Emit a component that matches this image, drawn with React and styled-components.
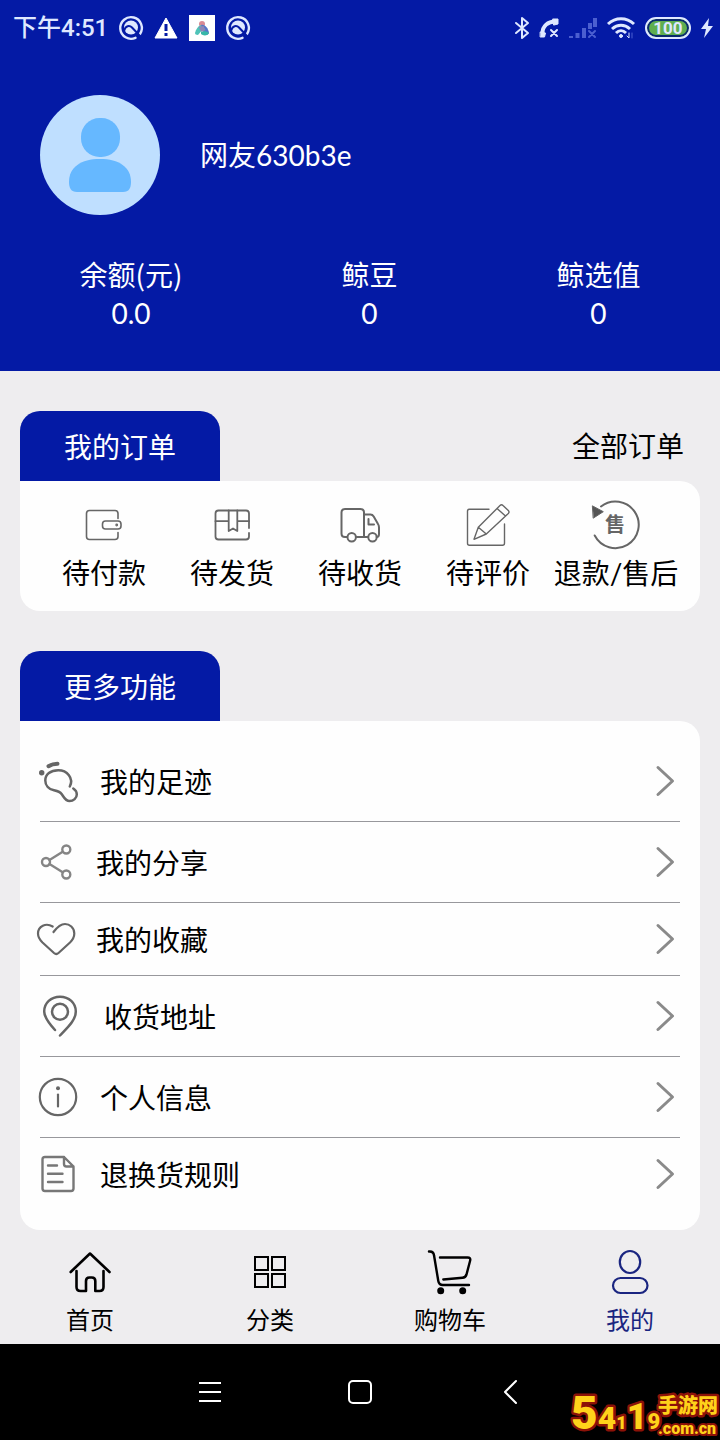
import React from "react";
import styled, { createGlobalStyle } from "styled-components";

const GlobalStyle = createGlobalStyle`
  * {
    box-sizing: border-box;
  }
  body {
    margin: 0;
    background: #eeedef;
    font-family: Lato, "Noto Sans CJK SC", sans-serif;
    font-weight: 400;
    color: #000;
  }
  a {
    color: inherit;
    text-decoration: none;
  }
  svg {
    display: block;
    flex-shrink: 0;
    overflow: visible;
  }
`;

const Page = styled.div`
  display: flex;
  flex-direction: column;
  min-height: 100vh;
`;

const Header = styled.header`
  background: #041aa5;
  color: #fff;
  padding-bottom: 38px;
`;

const StatusBar = styled.div`
  display: flex;
  align-items: center;
  justify-content: space-between;
  height: 55px;
  padding: 0 7px 0 13px;
  color: #dfe8ff;
`;

const StatusGroup = styled.div`
  display: flex;
  align-items: center;
  gap: ${({ $gap }) => $gap}px;
`;

const Clock = styled.span`
  font-family: Roboto, "Noto Sans CJK SC", sans-serif;
  font-size: 24px;
  font-weight: 500;
  line-height: 32px;
`;

const Battery = styled.span`
  display: flex;
  align-items: center;
  justify-content: center;
  width: 46px;
  height: 22px;
  border: 2px solid #dfe8ff;
  border-radius: 11px;
  background: #5fae50;
  box-shadow: inset 0 0 0 2px #0a2a6e;
  font-family: Roboto, sans-serif;
  font-size: 17px;
  font-weight: 700;
  line-height: 18px;
`;

const Profile = styled.div`
  display: flex;
  align-items: center;
  gap: 40px;
  padding: 40px;
`;

const UserName = styled.h1`
  margin: 0;
  font-size: 28px;
  font-weight: 400;
  line-height: 38px;
`;

const Stats = styled.div`
  display: flex;
  justify-content: space-around;
`;

const Stat = styled.div`
  display: flex;
  flex-direction: column;
  align-items: center;
  font-size: 28px;
  line-height: 39px;
`;

const StatLabel = styled.span`
  font-family: "Noto Sans CJK SC", sans-serif;
`;

const Main = styled.main`
  display: flex;
  flex: 1;
  flex-direction: column;
  gap: 40px;
  padding: 40px 20px 1px;
`;

const SectionHead = styled.div`
  display: flex;
  align-items: center;
  justify-content: space-between;
  padding-right: 16px;
  font-size: 28px;
  line-height: 40px;
`;

const SectionTab = styled.h2`
  width: 200px;
  margin: 0;
  padding: 16px 0 14px;
  border-radius: 20px 20px 0 0;
  background: #041aa5;
  color: #fff;
  font-size: 28px;
  font-weight: 400;
  line-height: 40px;
  text-align: center;
`;

const Card = styled.div`
  padding: 20px;
  border-radius: 0 20px 20px 20px;
  background: #fefefe;
`;

const Orders = styled(Card)`
  display: grid;
  grid-template-columns: repeat(5, 1fr);
  padding-bottom: 18px;
`;

const OrderLink = styled.a`
  display: flex;
  flex-direction: column;
  align-items: center;
  gap: 4px;
  font-size: 28px;
  line-height: 40px;
  white-space: nowrap;
`;

const MenuRow = styled.a`
  display: flex;
  align-items: center;
  padding: 20px 4px 20px 0;
  border-bottom: 1px solid #98989c;
  font-size: 28px;
  line-height: 30px;

  &:last-child {
    border-bottom: 0;
  }
`;

const MenuLabel = styled.span`
  flex: 1;
  padding: 2px 0 0 20px;
`;

const TabBar = styled.nav`
  display: grid;
  grid-template-columns: repeat(4, 1fr);
  padding: 19px 0 8px;
`;

const TabLink = styled.a`
  display: flex;
  flex-direction: column;
  align-items: center;
  gap: 9px;
  color: ${({ $active }) => ($active ? "#1a2580" : "#000")};
  font-size: 24px;
  line-height: 33px;
`;

const SystemBar = styled.div`
  position: relative;
  display: flex;
  align-items: center;
  justify-content: center;
  gap: 102px;
  height: 96px;
  background: #000;
`;

const SystemButton = styled.button`
  display: flex;
  align-items: center;
  justify-content: center;
  width: 48px;
  height: 48px;
  padding: 0;
  border: 0;
  background: none;
  color: #fff;
`;

const Watermark = styled.svg`
  position: absolute;
  right: 0;
  bottom: 0;
  fill: #ffd21a;
  stroke: #8c1208;
  stroke-linejoin: round;
  paint-order: stroke;
  font-family: Roboto, "Noto Sans CJK SC", sans-serif;
  font-weight: 900;
`;

// shared outline svg
const Line = ({ w, h, stroke = 2, color = "#666", children }) => (
  <svg
    width={w}
    height={h}
    viewBox={`0 0 ${w} ${h}`}
    fill="none"
    stroke={color}
    strokeWidth={stroke}
    strokeLinecap="round"
    strokeLinejoin="round"
    aria-hidden="true"
  >
    {children}
  </svg>
);

const AppMark = () => (
  <Line w={24} h={24} stroke={2.4} color="#dfe8ff">
    <path d="M16.500 21.800A10.800 10.800 0 1 1 21 18" />
    <circle cx="12" cy="11.500" r="7" fill="#dfe8ff" stroke="none" />
    <path d="M5 15C6.500 9.500 10.500 9 13 11.500L21 20" stroke="#041aa5" strokeWidth="2" />
  </Line>
);

const Warning = () => (
  <svg width="24" height="22" viewBox="0 0 24 22" aria-hidden="true">
    <path d="M12 1 23 21H1z" fill="#fff" stroke="#fff" strokeLinejoin="round" />
    <path d="M12 7v7M12 16v3" stroke="#041aa5" strokeWidth="3" />
  </svg>
);

const ColorApp = () => (
  <svg width="26" height="26" viewBox="0 0 26 26" aria-hidden="true">
    <path d="M0 0h26v26H0z" fill="#fff" />
    <circle cx="13" cy="9" r="3" fill="#d98a94" />
    <path d="M6 18c1-4 3-7 6-8l2 4-5 6c-2 0-3-1-3-2z" fill="#4fc3b8" />
    <path d="M12 10c4-1 7 3 8 8-1 2-3 2.500-5 1z" fill="#5576c9" />
    <path d="M9.500 12l5-1 2 4-4 2z" fill="#8f86b5" />
    <path d="M12 17c2-1 6-1 8 1-1 3-6 3-8 1z" fill="#37b7a8" />
  </svg>
);

const Bluetooth = () => (
  <Line w={14} h={24} stroke={2} color="#dfe8ff">
    <path d="M1 7l12 10-6 5V2l6 5L1 17" />
  </Line>
);

const Call = () => (
  <Line w={20} h={20} stroke={2} color="#dfe8ff">
    <path d="M3.500 15C3.500 8 9 3.500 16 3.500" strokeWidth="4" strokeLinecap="butt" />
    <path d="M1.500 14l5 1-1 4h-4zM14 1h5v5l-4 1z" fill="#dfe8ff" strokeWidth="1" />
    <path d="M12 12l6 6M18 12l-6 6" />
  </Line>
);

const Signal = () => (
  <Line w={28} h={20} stroke={4} color="#4b5fd0">
    <path d="M2 20v-2M8.500 20v-5M15 20V10M21 11V5M26 9V0" strokeLinecap="butt" />
    <path d="M20 13l6 6M26 13l-6 6" strokeWidth="2" />
  </Line>
);

const Wifi = () => (
  <Line w={28} h={22} stroke={3} color="#dfe8ff">
    <path d="M1 7c7.500-7 18.500-7 26 0M5 12c5.500-5 12.500-5 18 0M9 16c3-3 7-3 10 0" strokeLinecap="butt" />
    <circle cx="14" cy="19" r="1.500" fill="#dfe8ff" strokeWidth="1" />
    <path d="M22 16v5l-2-2" strokeWidth="1" />
    <path d="M25 21v-5" strokeWidth="1" stroke="#4b5fd0" />
  </Line>
);

const Bolt = () => (
  <svg width="12" height="20" viewBox="0 0 12 20" aria-hidden="true">
    <path d="M8 0 0 11h5L3 20l9-12H7z" fill="#dfe8ff" />
  </svg>
);

const Avatar = () => (
  <svg width="120" height="120" viewBox="0 0 120 120" role="img" aria-label="头像">
    <circle cx="60" cy="60" r="60" fill="#bfdfff" />
    <rect x="41" y="23" width="39" height="39" rx="18.500" fill="#66b8ff" />
    <path d="M29 87C29 72 41 64 60 64s31 8 31 23c0 6-2 10-8 10H37c-6 0-8-4-8-10z" fill="#66b8ff" />
  </svg>
);

const Wallet = () => (
  <Line w={48} h={48} stroke={1.6}>
    <path d="M38 17.500V12.500q0-3-3-3H9.500q-3 0-3 3v23q0 3 3 3H35q3 0 3-3V31.500" />
    <rect x="22.500" y="20" width="18.500" height="8" rx="3" />
    <circle cx="36.700" cy="24" r=".6" />
  </Line>
);

const Parcel = () => (
  <Line w={48} h={48} stroke={1.8}>
    <path d="M41 27V12.500q0-3-3-3H10.500q-3 0-3 3v23q0 3 3 3H38q3 0 3-3V32" />
    <path d="M7.500 20.200H20.700M29.300 20.200H41M20.700 9.500V30l4.300-2.500 4.300 2.500V9.500" />
  </Line>
);

const Truck = () => (
  <Line w={48} h={48} stroke={2}>
    <path d="M11 36H9q-3.500 0-3.500-3.500v-21Q5.500 8 9 8h15.500Q28 8 28 11.500V36M20.500 36H32" />
    <path d="M28 13.500h6.500q2 0 3.200 2l4.300 7.500q1 1.500 1 3.500V33q0 3-2.300 3" />
    <path d="M32.500 18v5.500H38" />
    <circle cx="15.700" cy="36.300" r="4.200" />
    <circle cx="36.500" cy="36.300" r="4.200" />
  </Line>
);

const Edit = () => (
  <Line w={48} h={48} stroke={1.4}>
    <path d="M25 8.300H5.500q-2 0-2 2v32q0 2 2 2h33q2 0 2-2V23" />
    <path d="M10 38.300l4.300-12L36 4.500q1.500-1.500 3 0l5.300 5q1.500 1.500 0 3L22.300 33zM14.300 26.300l8 6.700M33 7.500l8.500 7.500" />
  </Line>
);

const Refund = () => (
  <Line w={48} h={48} stroke={2}>
    <path d="M2.700 34.500A23.300 23.300 0 1 0 9 5.500" />
    <path d="M.7 5L11.300 10.700 1.500 17z" fill="#555" strokeWidth="1" />
    <text
      x="23"
      y="31"
      textAnchor="middle"
      fontSize="20"
      fontWeight="700"
      fontFamily='"Noto Sans CJK SC", sans-serif'
      fill="#666"
      stroke="none"
    >
      售
    </text>
  </Line>
);

const Footprint = () => (
  <Line w={40} h={40} stroke={2.5}>
    <circle cx="1.700" cy="11.800" r="2.700" fill="#666" stroke="none" />
    <path d="M8.500 5.200Q12 3 17.500 2.800" strokeWidth="4" />
    <path d="M29.800 25.500C34 17 27 9.200 18.300 9.200 10.500 9.200 5.300 13.500 5.300 19.500c0 5 3.500 8.700 8.700 9.800 4 .8 6 1.200 8 4.200 2.300 3.500 3.700 6.500 7.500 6.500 4 0 7.300-3 7.300-6.500 0-2.500-1.200-4.500-3.500-6" />
  </Line>
);

const Share = () => (
  <Line w={36} h={40} stroke={2.4} color="#858585">
    <circle cx="26.300" cy="7.500" r="4" />
    <circle cx="6" cy="20" r="4" />
    <circle cx="26.300" cy="32.500" r="4" />
    <path d="M9.500 18l13.200-8.300M9.500 22l13.200 8.300" />
  </Line>
);

const Heart = () => (
  <Line w={36} h={32} stroke={2.2}>
    <path d="M12.700 3.500C6-.5-2 3-2 10.500c0 4 2 6.500 4.500 9L14 30q2.300 2 4.500 0L30 19.500c2.500-2.500 4.300-5 4.300-9C34.300 4.500 29.500 1 25 1c-5 0-8.500 4-11.500 8" />
  </Line>
);

const Pin = () => (
  <Line w={44} h={40} stroke={2.5}>
    <circle cx="20" cy="15.700" r="8" />
    <path d="M15 34C10 28.500 4.200 22 4.200 15.500 4.200 7 11 .7 20 .7S35.800 7 35.800 15.500C35.800 24.500 27 32 20 39.500" />
  </Line>
);

const Info = () => (
  <Line w={40} h={40} stroke={2.2}>
    <circle cx="18" cy="20" r="18.200" />
    <circle cx="18" cy="11.300" r="2" fill="#666" stroke="none" />
    <path d="M18 17.500V29.500" />
  </Line>
);

const Doc = () => (
  <Line w={40} h={32} stroke={2.4} color="#777">
    <path d="M24-1H5Q2.500-1 2.500 1.500v29Q2.500 33 5 33h26q2.500 0 2.500-2.500V8.500zV6q0 2.500 2.500 2.500h7" />
    <path d="M8 7.500h9M8 15.700h14.500M8 24h14.500" />
  </Line>
);

const Chevron = () => (
  <Line w={20} h={32} stroke={3} color="#8a8a8a">
    <path d="M2 2.500L16.500 16 2 29.500" />
  </Line>
);

const Home = () => (
  <Line w={44} h={44} stroke={2.6} color="currentColor">
    <path d="M2.700 22L22 3.500 41.500 22" />
    <path d="M8.500 21v16q0 4 4 4H18V31q0-3.500 3.500-3.500h2.300q3.500 0 3.500 3.500v10h4.200q4 0 4-4V21" />
  </Line>
);

const Grid = () => (
  <Line w={44} h={44} stroke={2} color="currentColor">
    <path d="M7 7h13v13H7zM24 7h13v13H24zM7 24h13v13H7zM24 24h13v13H24z" strokeLinejoin="miter" />
  </Line>
);

const Cart = () => (
  <Line w={44} h={44} stroke={2.4} color="currentColor">
    <path d="M1 1.500Q5.500 1 6 5.300L10.300 31q.7 4 4.500 4H41" />
    <path d="M12 7.500H39.500q3.500 0 2.600 3.300L38.500 24.500q-1 3-4 3.300L15.300 29.500" />
    <circle cx="12.700" cy="40.700" r="2.300" fill="currentColor" />
    <circle cx="34.700" cy="40.700" r="2.300" fill="currentColor" />
  </Line>
);

const Person = () => (
  <Line w={44} h={44} stroke={2.2} color="currentColor">
    <ellipse cx="22" cy="12" rx="10.200" ry="11" />
    <rect x="5" y="28" width="34.500" height="15" rx="7.500" />
  </Line>
);

const stats = [
  { label: "余额(元)", value: "0.0" },
  { label: "鲸豆", value: "0" },
  { label: "鲸选值", value: "0" },
];

const orders = [
  { label: "待付款", Icon: Wallet },
  { label: "待发货", Icon: Parcel },
  { label: "待收货", Icon: Truck },
  { label: "待评价", Icon: Edit },
  { label: "退款/售后", Icon: Refund },
];

const menu = [
  { label: "我的足迹", Icon: Footprint },
  { label: "我的分享", Icon: Share },
  { label: "我的收藏", Icon: Heart },
  { label: "收货地址", Icon: Pin },
  { label: "个人信息", Icon: Info },
  { label: "退换货规则", Icon: Doc },
];

const tabs = [
  { label: "首页", Icon: Home },
  { label: "分类", Icon: Grid },
  { label: "购物车", Icon: Cart },
  { label: "我的", Icon: Person, active: true },
];

export default function App() {
  return (
    <Page>
      <GlobalStyle />
      <Header>
        <StatusBar>
          <StatusGroup $gap={11}>
            <Clock>下午4:51</Clock>
            <AppMark />
            <Warning />
            <ColorApp />
            <AppMark />
          </StatusGroup>
          <StatusGroup $gap={10}>
            <Bluetooth />
            <Call />
            <Signal />
            <Wifi />
            <Battery>100</Battery>
            <Bolt />
          </StatusGroup>
        </StatusBar>
        <Profile>
          <Avatar />
          <UserName>网友630b3e</UserName>
        </Profile>
        <Stats>
          {stats.map(({ label, value }) => (
            <Stat key={label}>
              <StatLabel>{label}</StatLabel>
              <span>{value}</span>
            </Stat>
          ))}
        </Stats>
      </Header>

      <Main>
        <section>
          <SectionHead>
            <SectionTab>我的订单</SectionTab>
            <a href="#orders">全部订单</a>
          </SectionHead>
          <Orders>
            {orders.map(({ label, Icon }) => (
              <OrderLink key={label} href="#orders">
                <Icon />
                <span>{label}</span>
              </OrderLink>
            ))}
          </Orders>
        </section>

        <section>
          <SectionHead>
            <SectionTab>更多功能</SectionTab>
          </SectionHead>
          <Card>
            {menu.map(({ label, Icon }) => (
              <MenuRow key={label} href="#menu">
                <Icon />
                <MenuLabel>{label}</MenuLabel>
                <Chevron />
              </MenuRow>
            ))}
          </Card>
        </section>
      </Main>

      <TabBar>
        {tabs.map(({ label, Icon, active }) => (
          <TabLink key={label} href="#tab" $active={active}>
            <Icon />
            <span>{label}</span>
          </TabLink>
        ))}
      </TabBar>

      <SystemBar>
        <SystemButton aria-label="菜单">
          <Line w={22} h={20} stroke={2} color="currentColor">
            <path d="M0 1h22M0 10h22M0 19h22" strokeLinecap="butt" />
          </Line>
        </SystemButton>
        <SystemButton aria-label="主屏幕">
          <Line w={24} h={24} stroke={2} color="currentColor">
            <rect x="1" y="1" width="22" height="22" rx="4" />
          </Line>
        </SystemButton>
        <SystemButton aria-label="返回">
          <Line w={12} h={24} stroke={2} color="currentColor">
            <path d="M12 1L1 12l11 11" />
          </Line>
        </SystemButton>
        <Watermark width="150" height="56" viewBox="0 0 150 56" strokeWidth="5">
          <text x="1" y="45">
            <tspan fontSize="46">5</tspan>
            <tspan fontSize="32">4</tspan>
            <tspan fontSize="18">1</tspan>
            <tspan fontSize="36">1</tspan>
            <tspan fontSize="22">9</tspan>
          </text>
          <text x="88" y="29" fontSize="20">手游网</text>
          <text x="88" y="50" fontSize="16" strokeWidth="4">.com.cn</text>
        </Watermark>
      </SystemBar>
    </Page>
  );
}
